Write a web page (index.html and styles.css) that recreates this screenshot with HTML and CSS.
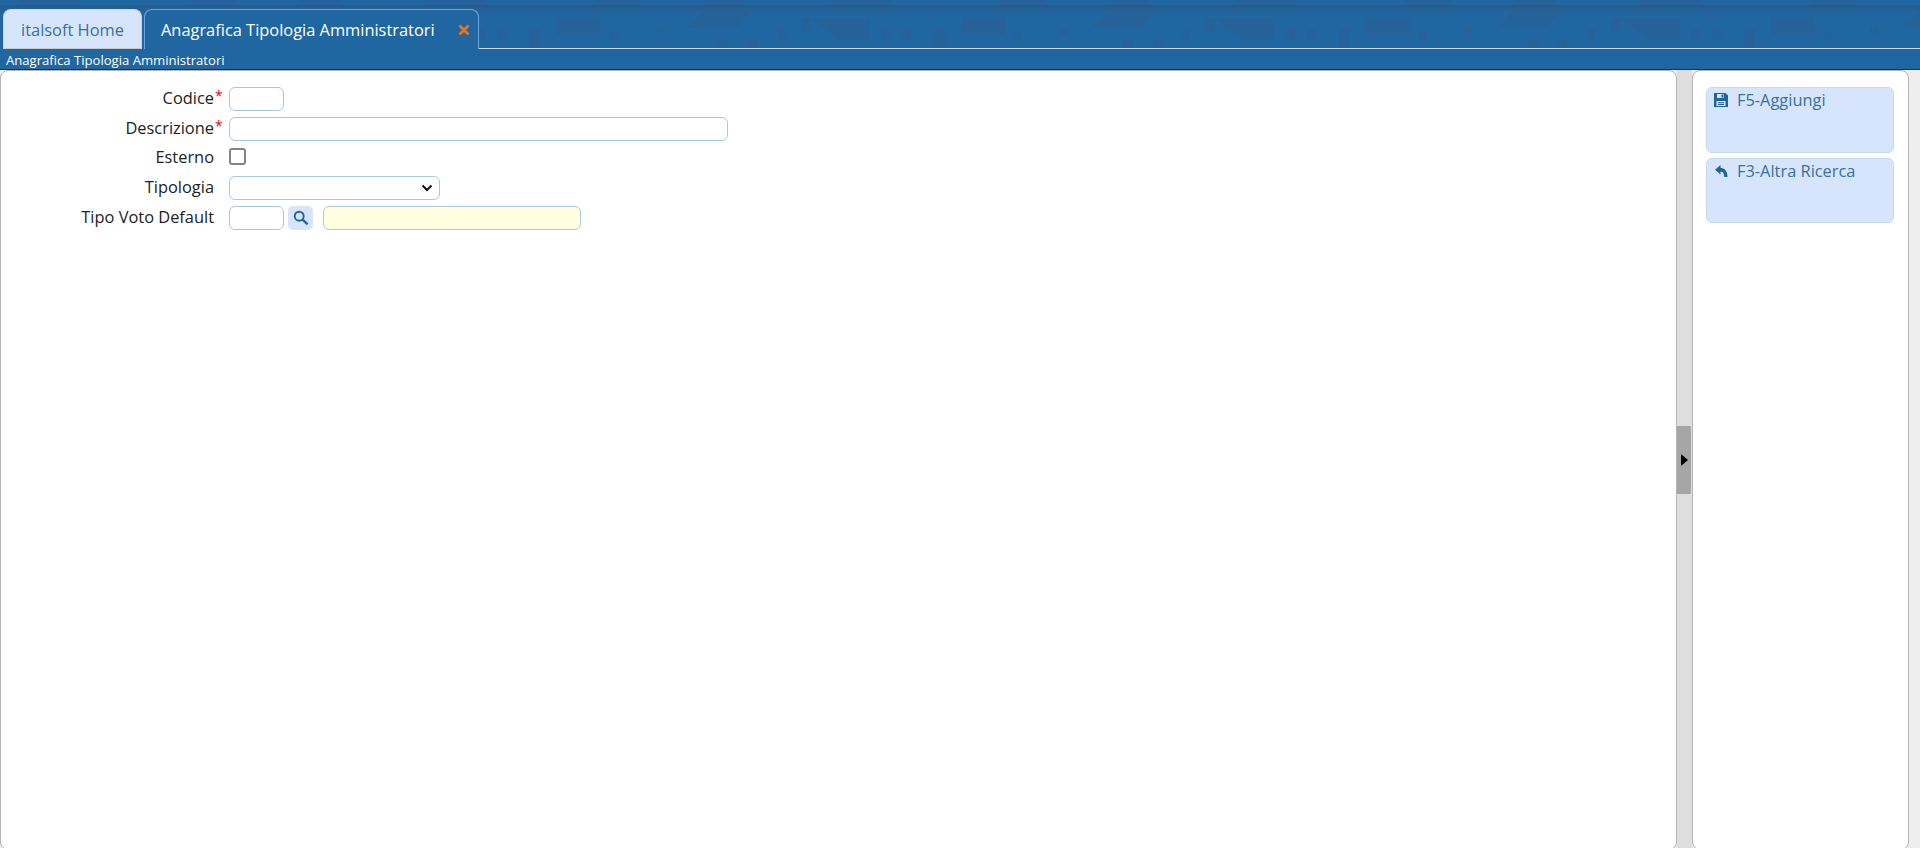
FILE: index.html
```html
<!DOCTYPE html>
<html lang="it">
<head>
<meta charset="utf-8">
<title>Anagrafica Tipologia Amministratori</title>
<link rel="stylesheet" href="styles.css">
</head>
<body>
<header class="top">
  <nav class="tabs">
    <a class="tab tab-home">italsoft Home</a>
    <a class="tab tab-active">
      <span>Anagrafica Tipologia Amministratori</span>
      <svg class="close" viewBox="0 0 12 12" width="12" height="12"><path d="M1.500 1.500l9 9M10.500 1.500l-9 9" stroke="#e8741c" stroke-width="2.800" fill="none"/></svg>
    </a>
    <div class="tabs-rest"></div>
  </nav>
  <div class="subtitle">Anagrafica Tipologia Amministratori</div>
</header>
<main class="body">
  <section class="panel-main">
    <form class="form">
      <div class="row"><label class="lbl">Codice<i class="req">*</i></label><input class="inp w-short" type="text"></div>
      <div class="row"><label class="lbl">Descrizione<i class="req">*</i></label><input class="inp w-long" type="text"></div>
      <div class="row"><label class="lbl">Esterno</label><span class="check"></span></div>
      <div class="row"><label class="lbl">Tipologia</label>
        <span class="inp select"><svg viewBox="0 0 12 8" width="12" height="8"><path d="M1.500 1.500L6 6l4.500-4.500" stroke="#111" stroke-width="2" fill="none"/></svg></span></div>
      <div class="row"><label class="lbl">Tipo Voto Default</label><input class="inp w-short" type="text">
        <span class="search"><svg viewBox="0 0 16 16" width="16" height="16"><circle cx="6.200" cy="6.200" r="4.500" stroke="#20649c" stroke-width="1.900" fill="none"/><path d="M9.600 9.600l5 4.800" stroke="#20649c" stroke-width="2.300"/></svg></span>
        <input class="inp yellow" type="text"></div>
    </form>
  </section>
  <div class="gutter"><div class="handle"><span class="arrow"></span></div></div>
  <aside class="panel-side">
    <button class="act act-1" type="button">
      <svg class="ico" viewBox="0 0 14 14" width="14" height="14"><path fill-rule="evenodd" d="M0 0h11.500L14 2.500V14H0zM3 1v4h7V1zM7.500 1.500h2v3h-2zM2.500 8v5h9V8zM4 9.200h6v1H4zM4 11h6v1H4z" fill="#20649c"/></svg>
      <span>F5-Aggiungi</span>
    </button>
    <button class="act act-2" type="button">
      <svg class="ico" viewBox="0 0 14 14" width="14" height="14"><path d="M6.500 1L1 5.700l5.500 4.700V7.700c2.600 0 3.500 1.300 3.800 5.300h3.200C13.500 7 10.500 4 6.500 3.800z" fill="#20649c"/></svg>
      <span>F3-Altra Ricerca</span>
    </button>
  </aside>
  <div class="edge"></div>
</main>
</body>
</html>
```

FILE: styles.css
```css
* { box-sizing: border-box; }
html, body { margin: 0; height: 100%; }
body {
  width: 1920px; height: 848px; overflow: hidden;
  font-family: "Open Sans", sans-serif; font-size: 16.4px; color: #222;
  display: flex; flex-direction: column; background: #eee;
}
.top {
  height: 70px; flex: none; background-color: #2066a1;
  background-image:
    url("data:image/svg+xml,%3Csvg xmlns='http://www.w3.org/2000/svg' width='405' height='48'%3E%3Cg fill='%232a5f94' fill-opacity='.55'%3E%3Cpath d='M151 17h44v18h-44zM300 8h50l-18 20h-51zM396 18h9v14h-9zM0 18h60v22H28zM71 28h9v12h-9zM92 28h9v12h-9zM124 28h11v20h-11zM313 40h10v8h-10zM343 40h9v8h-9zM373 28h7v14h-7zM20 0h60v4H20zM190 0h45v4h-45zM300 0h40v4h-40z'/%3E%3Ccircle cx='208' cy='36' r='5'/%3E%3Ccircle cx='254' cy='31' r='5'/%3E%3C/g%3E%3C/svg%3E"),
    linear-gradient(#2066a1 0, #2066a1 4.500px, #2a5680 5px, #2b5a88 6px, #25608f 8px, #2066a1 13px);
  background-repeat: repeat-x, no-repeat;
  background-size: 405px 48px, 100% 48px;
  border-bottom: 1px solid #2a3138;
  display: flex; flex-direction: column;
}
.tabs { height: 49px; display: flex; padding-left: 3px; align-items: flex-end; flex: none; }
.tab {
  height: 40px; border-radius: 8px 8px 0 0;
  display: flex; align-items: center; flex: none;
}
.tab-home {
  width: 139px; background: #d6e5fc; color: #39709f; justify-content: center;
  border: 1px solid #c5d8f0; border-bottom: 1px solid #c9c9c9;
}
.tab-active {
  width: 335px; margin-left: 2px; color: #fff; padding-left: 16px; background: #2066a1;
  border: 1px solid #6ea6d8; border-bottom: 0;
}
.close { margin-left: 23px; }
.tabs-rest { flex: 1; height: 1px; background: #cfd6dc; }
.subtitle { height: 20px; padding-left: 6px; font-size: 13.100px; line-height: 22px; color: #fff; }
.body { height: 780px; flex: none; display: flex; }
.panel-main {
  width: 1677px; background: #fff; border: 1px solid #b5b5b5;
  border-radius: 8px; padding: 16px 0 0; flex: none;
}
.form { display: flex; flex-direction: column; }
.row { height: 29.700px; display: flex; align-items: flex-start; }
.lbl { width: 213px; text-align: right; line-height: 22px; color: #222; position: relative; flex: none; }
.req { position: absolute; left: 214px; top: -2px; font-size: 14px; font-style: normal; color: #e00; }
.inp { height: 24px; margin: 0 0 0 15px; border: 1px solid #a6c8e0; border-radius: 6px; background: #fff; padding: 0; display: block; flex: none; }
.w-short { width: 55px; }
.w-long { width: 499px; }
.select { width: 211px; display: flex; align-items: center; justify-content: flex-end; padding-right: 6px; }
.yellow { width: 258px; margin-left: 10px; background: #ffffdf; border-color: #a9cad8; }
.check { width: 17px; height: 17px; margin: 2px 0 0 15px; border: 2px solid #85828e; border-radius: 3px; background: #fff; flex: none; }
.search { width: 25px; height: 24px; margin-left: 4px; background: #d6e5fc; border-radius: 5px; display: flex; align-items: center; justify-content: center; flex: none; }
.gutter { width: 15px; height: 780px; background: #dedede; display: flex; align-items: center; flex: none; }
.handle { width: 14px; height: 68px; background: #a6a6a6; display: flex; align-items: center; justify-content: center; }
.arrow { width: 0; height: 0; border-left: 7px solid #000; border-top: 6px solid transparent; border-bottom: 6px solid transparent; }
.panel-side {
  width: 217px; background: #fff; border: 1px solid #b5b5b5;
  border-radius: 8px; padding: 16px 14px 0 13px; display: flex; flex-direction: column; gap: 5px; flex: none;
}
.act {
  width: 188px; background: #d6e5fc; border: 1px solid #c4daf1; border-radius: 6px; color: #39709f;
  font: 16.400px "Open Sans", sans-serif; display: flex; align-items: flex-start; padding: 0 0 0 7px; text-align: left; flex: none;
}
.act span { line-height: 24px; margin-left: 9px; }
.ico { margin-top: 5px; flex: none; }
.act-1 { height: 66px; }
.act-2 { height: 65px; }
.edge { flex: 1; background: #eee; }
```
